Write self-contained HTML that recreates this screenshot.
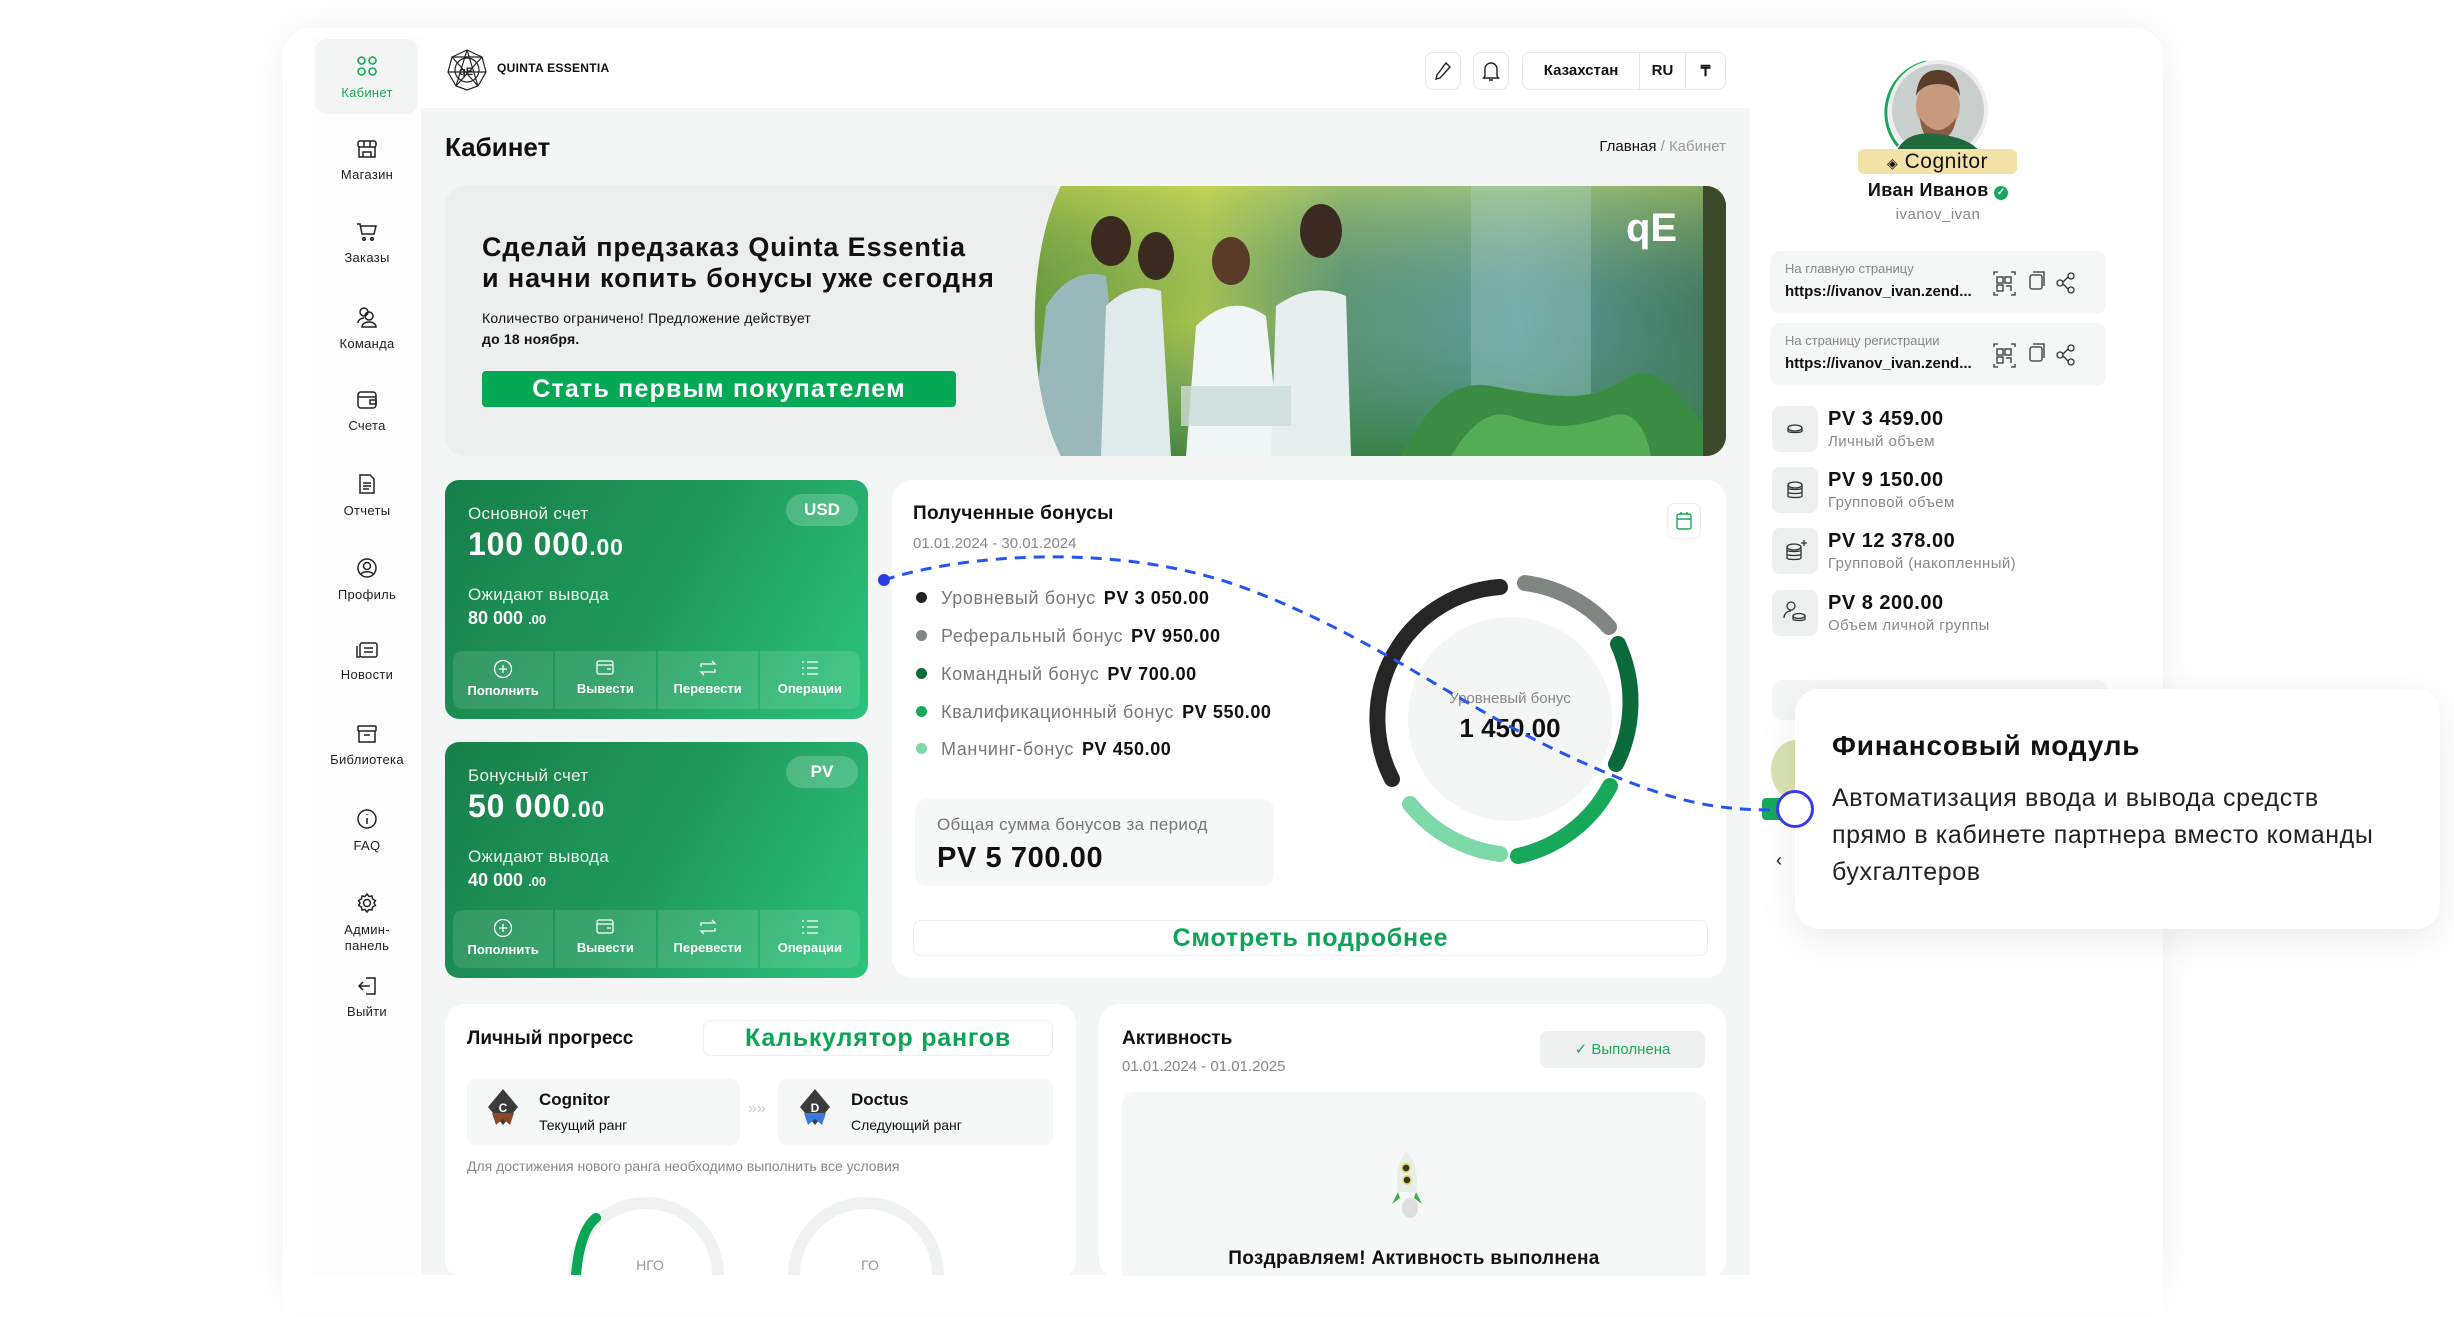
<!DOCTYPE html>
<html><head><meta charset="utf-8">
<style>
*{box-sizing:border-box;margin:0;padding:0}
body{width:2454px;height:1317px;background:#fff;font-family:"Liberation Sans",sans-serif;color:#111;position:relative;overflow:hidden}
.a{position:absolute}
.frame{left:283px;top:28px;width:1880px;height:1274px;background:#fff;border-radius:28px;box-shadow:0 0 40px rgba(0,0,0,.06)}
.main{left:421px;top:108px;width:1334px;height:1167px;background:#f4f5f5}
.side{left:313px;top:36px;width:108px;height:1240px;background:#fdfdfd}
.si{position:absolute;left:313px;width:108px;text-align:center;font-size:13px;color:#222;letter-spacing:.3px}
.si svg{display:block;margin:0 auto 8px}
.card{background:#fff;border-radius:20px}
.gcard{border-radius:14px;background:linear-gradient(120deg,#187f4a 0%,#1f9a5c 50%,#2cc47c 100%);color:#fff}
.gcard .l{font-size:17px;opacity:.9;letter-spacing:.3px}
.acts{position:absolute;left:8px;right:8px;bottom:10px;height:58px;display:flex;gap:2px}
.acts div{flex:1;background:rgba(255,255,255,.12);text-align:center;font-size:13px;font-weight:bold;padding-top:8px}
.acts div:first-child{border-radius:10px 0 0 10px}.acts div:last-child{border-radius:0 10px 10px 0}
.acts svg{display:block;margin:0 auto 4px}
.pill{position:absolute;right:10px;top:14px;width:72px;height:32px;border-radius:16px;background:rgba(255,255,255,.2);font-weight:bold;font-size:17px;text-align:center;line-height:32px}
.leg{position:absolute;left:916px;font-size:18px;color:#777;letter-spacing:.6px}
.leg b{color:#111;margin-left:8px}
.leg i{display:inline-block;width:11px;height:11px;border-radius:50%;margin-right:14px;vertical-align:1px}
.st{position:absolute;left:1772px;width:340px;height:48px}
.st .ic{position:absolute;left:0;top:0;width:46px;height:46px;border-radius:8px;background:#eef0f0}
.st .v{position:absolute;left:56px;top:2px;font-size:20px;font-weight:bold;letter-spacing:.5px}
.st .t{position:absolute;left:56px;top:27px;font-size:15px;color:#888;letter-spacing:.4px}
.lnk{position:absolute;left:1770px;width:336px;height:63px;background:#f5f6f6;border-radius:10px}
.lnk .t{position:absolute;left:15px;top:10px;font-size:13px;color:#888}
.lnk .u{position:absolute;left:15px;top:32px;font-size:15px;font-weight:bold}
</style></head><body>
<div class="a frame"></div>
<div class="a side"></div>
<div class="a main"></div>
<div class="a" style="left:1750px;top:36px;width:400px;height:1240px;background:#fff"></div>

<!-- sidebar -->
<div class="a" style="left:315px;top:39px;width:103px;height:75px;background:#f3f5f4;border-radius:12px"></div>
<div class="si" style="top:55px;color:#17a85b"><svg width="22" height="22" viewBox="0 0 22 22" fill="none" stroke="#17a85b" stroke-width="1.6"><rect x="2" y="2" width="7" height="7" rx="3.5"/><rect x="13" y="2" width="7" height="7" rx="3.5"/><rect x="2" y="13" width="7" height="7" rx="3.5"/><rect x="13" y="13" width="7" height="7" rx="3.5"/></svg>Кабинет</div>
<div class="si" style="top:139px"><svg width="22" height="20" viewBox="0 0 22 20" fill="none" stroke="#222" stroke-width="1.5"><rect x="2" y="2" width="18" height="6" rx="2"/><path d="M3 8v10h16V8M8 2v6M14 2v6M7 18v-5h8v5"/></svg>Магазин</div>
<div class="si" style="top:222px"><svg width="22" height="20" viewBox="0 0 22 20" fill="none" stroke="#222" stroke-width="1.5"><path d="M1 2h3l2 10h12l2-8H5"/><circle cx="8" cy="17" r="1.3"/><circle cx="16" cy="17" r="1.3"/></svg>Заказы</div>
<div class="si" style="top:306px"><svg width="24" height="22" viewBox="0 0 24 22" fill="none" stroke="#222" stroke-width="1.5"><circle cx="9" cy="6" r="4"/><circle cx="14" cy="10" r="4"/><path d="M3 17c0-3 3-5 6-5M7 21c0-3 3-5 7-5s7 2 7 5z"/></svg>Команда</div>
<div class="si" style="top:390px"><svg width="22" height="20" viewBox="0 0 22 20" fill="none" stroke="#222" stroke-width="1.5"><rect x="2" y="2" width="18" height="16" rx="3"/><path d="M2 7h18M14 10h6v4h-6z"/></svg>Счета</div>
<div class="si" style="top:473px"><svg width="18" height="22" viewBox="0 0 18 22" fill="none" stroke="#222" stroke-width="1.5"><path d="M2 2h10l4 4v14H2z"/><path d="M5 10h8M5 13h8M5 16h6"/></svg>Отчеты</div>
<div class="si" style="top:557px"><svg width="22" height="22" viewBox="0 0 22 22" fill="none" stroke="#222" stroke-width="1.5"><circle cx="11" cy="11" r="9"/><circle cx="11" cy="9" r="3.5"/><path d="M5 17c2-3 10-3 12 0"/></svg>Профиль</div>
<div class="si" style="top:641px"><svg width="24" height="18" viewBox="0 0 24 18" fill="none" stroke="#222" stroke-width="1.5"><rect x="5" y="2" width="17" height="14" rx="2"/><path d="M2 5v11h3M9 7h9M9 11h9"/></svg>Новости</div>
<div class="si" style="top:724px"><svg width="22" height="20" viewBox="0 0 22 20" fill="none" stroke="#222" stroke-width="1.5"><rect x="2" y="2" width="18" height="5" rx="1"/><path d="M3 7v11h16V7M8 11h6"/></svg>Библиотека</div>
<div class="si" style="top:808px"><svg width="22" height="22" viewBox="0 0 22 22" fill="none" stroke="#222" stroke-width="1.5"><circle cx="11" cy="11" r="9"/><path d="M11 10v6M11 6v1"/></svg>FAQ</div>
<div class="si" style="top:892px;line-height:16px"><svg width="22" height="22" viewBox="0 0 22 22" fill="none" stroke="#222" stroke-width="1.5"><path d="M11 2l2 2.5 3-.5.6 3 2.8 1.5-1.4 2.5 1.4 2.5-2.8 1.5-.6 3-3-.5L11 20l-2-2.5-3 .5-.6-3L2.6 13.5 4 11 2.6 8.5 5.4 7 6 4l3 .5z"/><circle cx="11" cy="11" r="3.5"/></svg>Админ-<br>панель</div>
<div class="si" style="top:976px"><svg width="22" height="20" viewBox="0 0 22 20" fill="none" stroke="#222" stroke-width="1.5"><path d="M10 2h9v16h-9M14 10H3M7 6l-4 4 4 4"/></svg>Выйти</div>

<!-- header -->
<svg class="a" style="left:446px;top:48px" width="42" height="44" viewBox="0 0 42 44" fill="none" stroke="#222" stroke-width="1.2"><polygon points="21,2 36,9 40,24 32,38 21,42 10,38 2,24 6,9"/><circle cx="21" cy="22" r="12"/><path d="M21 2L10 38M21 2l11 36M2 24l38 0M6 9l30 0M6 9l26 29M36 9L10 38"/><text x="13" y="27" font-size="11" font-weight="bold" fill="#222" stroke="none" font-family="Liberation Sans">qE</text></svg>
<div class="a" style="left:497px;top:61px;font-size:12px;font-weight:bold;letter-spacing:.3px">QUINTA ESSENTIA</div>
<div class="a" style="left:1425px;top:52px;width:36px;height:38px;border:1px solid #e6e6e6;border-radius:8px"></div>
<svg class="a" style="left:1434px;top:61px" width="18" height="20" viewBox="0 0 18 20" fill="none" stroke="#222" stroke-width="1.4"><path d="M12 2l4 4L6 17l-4 1 1-4z"/></svg>
<div class="a" style="left:1473px;top:52px;width:36px;height:38px;border:1px solid #e6e6e6;border-radius:8px"></div>
<svg class="a" style="left:1482px;top:60px" width="18" height="22" viewBox="0 0 18 22" fill="none" stroke="#222" stroke-width="1.4"><path d="M3 16V9a6 6 0 0112 0v7l1.5 2h-15zM7 20h4"/></svg>
<div class="a" style="left:1522px;top:52px;width:204px;height:38px;border:1px solid #e6e6e6;border-radius:8px;font-size:15px;font-weight:bold;display:flex;align-items:center">
<span style="width:117px;text-align:center;border-right:1px solid #e6e6e6;line-height:38px">Казахстан</span><span style="width:46px;text-align:center;border-right:1px solid #e6e6e6;line-height:38px">RU</span><span style="flex:1;text-align:center">₸</span></div>

<div class="a" style="left:445px;top:132px;font-size:26px;font-weight:bold">Кабинет</div>
<div class="a" style="left:1550px;top:138px;width:176px;text-align:right;font-size:15px"><span>Главная</span> <span style="color:#999">/ Кабинет</span></div>

<!-- banner -->
<div class="a" style="left:445px;top:186px;width:1281px;height:270px;background:#ecefee;border-radius:20px;overflow:hidden">
<svg class="a" style="left:586px;top:0" width="695" height="270" viewBox="0 0 695 270">
<defs>
<linearGradient id="bg1" x1="0" x2="1" y1="0" y2="0"><stop offset="0" stop-color="#6c9a3a"/><stop offset=".25" stop-color="#a6c24e"/><stop offset=".45" stop-color="#5c9676"/><stop offset=".7" stop-color="#5e9c9a"/><stop offset="1" stop-color="#3f7658"/></linearGradient>
<linearGradient id="bg2" x1="0" x2="0" y1="0" y2="1"><stop offset="0" stop-color="#e4e860" stop-opacity=".45"/><stop offset=".5" stop-color="#4f8e7e" stop-opacity="0"/><stop offset="1" stop-color="#2f7a3a" stop-opacity=".8"/></linearGradient>
<clipPath id="cp"><path d="M30 0H695V270H30C-5 200 -5 70 30 0z"/></clipPath>
</defs>
<g clip-path="url(#cp)">
<rect width="695" height="270" fill="url(#bg1)"/>
<rect width="695" height="270" fill="url(#bg2)"/>
<rect x="440" y="0" width="120" height="270" fill="#b6dcd8" opacity=".3"/>
<path d="M370 270q40-80 90-70t80 10 60-20 95 80z" fill="#3a8c42"/>
<path d="M420 270q30-50 60-40t50 10 50-10 40 40z" fill="#52ad55"/>
<rect x="672" y="0" width="23" height="270" fill="#3a4a2a"/>
<path d="M0 270L15 120Q40 80 75 90L95 270z" fill="#9ab8ba"/>
<ellipse cx="80" cy="55" rx="20" ry="25" fill="#3a2a20"/>
<path d="M70 270L75 120Q100 95 130 105L140 270z" fill="#dfeaea"/>
<ellipse cx="125" cy="70" rx="18" ry="24" fill="#3a2a20"/>
<path d="M155 270L165 140Q200 105 235 130L250 270z" fill="#f0f5f5"/>
<ellipse cx="200" cy="75" rx="19" ry="24" fill="#5a3a28"/>
<path d="M240 270L245 120Q280 95 315 110L320 270z" fill="#e6eeee"/>
<ellipse cx="290" cy="45" rx="21" ry="27" fill="#3a2a20"/>
<rect x="150" y="200" width="110" height="40" fill="#c9dcd8" opacity=".8"/>
<text x="595" y="55" font-size="40" font-weight="bold" fill="#fff" font-family="Liberation Sans">qE</text>
</g></svg>
<div class="a" style="left:37px;top:46px;font-size:27px;font-weight:bold;line-height:31px;letter-spacing:.9px">Сделай предзаказ Quinta Essentia<br>и начни копить бонусы уже сегодня</div>
<div class="a" style="left:37px;top:122px;font-size:14px;line-height:21px;letter-spacing:.2px">Количество ограничено! Предложение действует<br><b>до 18 ноября.</b></div>
<div class="a" style="left:37px;top:185px;width:474px;height:36px;background:#04a855;border-radius:4px;color:#fff;font-size:25px;font-weight:bold;text-align:center;line-height:36px;letter-spacing:1.2px">Стать первым покупателем</div>
</div>

<!-- accounts -->
<div class="a gcard" style="left:445px;top:480px;width:423px;height:239px">
<div class="a l" style="left:23px;top:24px">Основной счет</div>
<div class="a" style="left:23px;top:46px;font-size:32px;font-weight:bold;letter-spacing:.8px">100 000<span style="font-size:23px">.00</span></div>
<div class="a l" style="left:23px;top:105px">Ожидают вывода</div>
<div class="a" style="left:23px;top:128px;font-size:18px;font-weight:bold">80 000 <span style="font-size:13px">.00</span></div>
<div class="pill">USD</div>
<div class="acts">
<div><svg width="20" height="20" viewBox="0 0 20 20" fill="none" stroke="#fff" stroke-width="1.3"><circle cx="10" cy="10" r="8.5"/><path d="M10 6v8M6 10h8"/></svg>Пополнить</div>
<div><svg width="20" height="18" viewBox="0 0 20 18" fill="none" stroke="#fff" stroke-width="1.3"><rect x="2" y="2" width="16" height="13" rx="2"/><path d="M2 6h16M12 10h4"/></svg>Вывести</div>
<div><svg width="20" height="18" viewBox="0 0 20 18" fill="none" stroke="#fff" stroke-width="1.3"><path d="M3 8V5h14l-3-3M17 10v3H3l3 3"/></svg>Перевести</div>
<div><svg width="20" height="18" viewBox="0 0 20 18" fill="none" stroke="#fff" stroke-width="1.3"><path d="M7 3h11M7 9h11M7 15h11M2 3h2M2 9h2M2 15h2"/></svg>Операции</div>
</div></div>
<div class="a gcard" style="left:445px;top:742px;width:423px;height:236px">
<div class="a l" style="left:23px;top:24px">Бонусный счет</div>
<div class="a" style="left:23px;top:46px;font-size:32px;font-weight:bold;letter-spacing:.8px">50 000<span style="font-size:23px">.00</span></div>
<div class="a l" style="left:23px;top:105px">Ожидают вывода</div>
<div class="a" style="left:23px;top:128px;font-size:18px;font-weight:bold">40 000 <span style="font-size:13px">.00</span></div>
<div class="pill">PV</div>
<div class="acts">
<div><svg width="20" height="20" viewBox="0 0 20 20" fill="none" stroke="#fff" stroke-width="1.3"><circle cx="10" cy="10" r="8.5"/><path d="M10 6v8M6 10h8"/></svg>Пополнить</div>
<div><svg width="20" height="18" viewBox="0 0 20 18" fill="none" stroke="#fff" stroke-width="1.3"><rect x="2" y="2" width="16" height="13" rx="2"/><path d="M2 6h16M12 10h4"/></svg>Вывести</div>
<div><svg width="20" height="18" viewBox="0 0 20 18" fill="none" stroke="#fff" stroke-width="1.3"><path d="M3 8V5h14l-3-3M17 10v3H3l3 3"/></svg>Перевести</div>
<div><svg width="20" height="18" viewBox="0 0 20 18" fill="none" stroke="#fff" stroke-width="1.3"><path d="M7 3h11M7 9h11M7 15h11M2 3h2M2 9h2M2 15h2"/></svg>Операции</div>
</div></div>

<!-- bonuses -->
<div class="a card" style="left:892px;top:480px;width:834px;height:498px"></div>
<div class="a" style="left:913px;top:503px;font-size:19px;font-weight:bold;letter-spacing:.3px">Полученные бонусы</div>
<div class="a" style="left:913px;top:535px;font-size:15px;color:#888">01.01.2024 - 30.01.2024</div>
<div class="a" style="left:1667px;top:503px;width:34px;height:36px;border:1px solid #eee;border-radius:8px"></div>
<svg class="a" style="left:1675px;top:511px" width="18" height="20" viewBox="0 0 18 20" fill="none" stroke="#17a85b" stroke-width="1.4"><rect x="2" y="3" width="14" height="15" rx="2"/><path d="M2 8h14M6 1v3M12 1v3"/></svg>
<div class="leg" style="top:588px"><i style="background:#222"></i>Уровневый бонус<b>PV 3 050.00</b></div>
<div class="leg" style="top:626px"><i style="background:#808784"></i>Реферальный бонус<b>PV 950.00</b></div>
<div class="leg" style="top:664px"><i style="background:#0a6a3a"></i>Командный бонус<b>PV 700.00</b></div>
<div class="leg" style="top:702px"><i style="background:#17a85b"></i>Квалификационный бонус<b>PV 550.00</b></div>
<div class="leg" style="top:739px"><i style="background:#7dd9a8"></i>Манчинг-бонус<b>PV 450.00</b></div>
<div class="a" style="left:915px;top:799px;width:359px;height:87px;background:#f6f7f7;border-radius:12px"></div>
<div class="a" style="left:937px;top:815px;font-size:17px;color:#777;letter-spacing:.3px">Общая сумма бонусов за период</div>
<div class="a" style="left:937px;top:842px;font-size:29px;font-weight:bold;letter-spacing:.6px">PV 5 700.00</div>
<div class="a" style="left:913px;top:920px;width:795px;height:36px;border:1px solid #eee;border-radius:8px;text-align:center;font-size:25px;font-weight:bold;color:#0aa556;line-height:34px;letter-spacing:.8px">Смотреть подробнее</div>
<svg class="a" style="left:1360px;top:569px" width="300" height="300" viewBox="0 0 300 300" fill="none" stroke-linecap="round">
<circle cx="150" cy="150" r="102" fill="#f4f5f5"/>
<path d="M140 18 A132 132 0 0 0 32 210" stroke="#262626" stroke-width="16"/>
<path d="M165 14 A137 137 0 0 1 249 58" stroke="#7f8682" stroke-width="16"/>
<path d="M258 75 A140 140 0 0 1 256 195" stroke="#0a6a3a" stroke-width="16"/>
<path d="M250 217 A137 137 0 0 1 158 287" stroke="#17a85b" stroke-width="16"/>
<path d="M140 285 A137 137 0 0 1 50 235" stroke="#7dd9a8" stroke-width="16"/>
<text x="150" y="134" font-size="15" fill="#888" text-anchor="middle" font-family="Liberation Sans">Уровневый бонус</text>
<text x="150" y="168" font-size="26" font-weight="bold" fill="#111" text-anchor="middle" font-family="Liberation Sans">1 450.00</text>
</svg>

<!-- bottom cards -->
<div class="a card" style="left:445px;top:1004px;width:631px;height:275px"></div>
<div class="a" style="left:467px;top:1028px;font-size:19px;font-weight:bold">Личный прогресс</div>
<div class="a" style="left:703px;top:1020px;width:350px;height:36px;border:1px solid #eee;border-radius:8px;text-align:center;font-size:25px;font-weight:bold;color:#0aa556;line-height:34px;letter-spacing:.8px">Калькулятор рангов</div>
<div class="a" style="left:467px;top:1078px;width:273px;height:68px;background:#f6f7f7;border-radius:10px"></div>
<div class="a" style="left:778px;top:1078px;width:275px;height:68px;background:#f6f7f7;border-radius:10px"></div>
<svg class="a" style="left:486px;top:1087px" width="34" height="40" viewBox="0 0 34 40"><path d="M17 2L32 20 17 38 2 20z" fill="#3b3b3b"/><path d="M6 26l4 12 7-6 7 6 4-12" fill="#8a4a2a"/><text x="17" y="25" font-size="12" font-weight="bold" fill="#fff" text-anchor="middle" font-family="Liberation Sans">C</text></svg>
<div class="a" style="left:539px;top:1090px;font-size:17px;font-weight:bold">Cognitor</div>
<div class="a" style="left:539px;top:1117px;font-size:14px">Текущий ранг</div>
<div class="a" style="left:748px;top:1100px;font-size:16px;color:#ccc">»»</div>
<svg class="a" style="left:798px;top:1087px" width="34" height="40" viewBox="0 0 34 40"><path d="M17 2L32 20 17 38 2 20z" fill="#3b3b3b"/><path d="M6 26l4 12 7-6 7 6 4-12" fill="#3a7ae0"/><text x="17" y="25" font-size="12" font-weight="bold" fill="#fff" text-anchor="middle" font-family="Liberation Sans">D</text></svg>
<div class="a" style="left:851px;top:1090px;font-size:17px;font-weight:bold">Doctus</div>
<div class="a" style="left:851px;top:1117px;font-size:14px">Следующий ранг</div>
<div class="a" style="left:467px;top:1158px;font-size:14px;color:#888">Для достижения нового ранга необходимо выполнить все условия</div>
<svg class="a" style="left:558px;top:1190px" width="420" height="85" viewBox="0 0 420 85" fill="none"><path d="M16 85 A70 70 0 0 1 160 85" stroke="#f0f1f1" stroke-width="12"/><path d="M18 85 Q22 40 38 28" stroke="#0aa556" stroke-width="10" stroke-linecap="round"/><path d="M236 85 A70 70 0 0 1 380 85" stroke="#f0f1f1" stroke-width="12"/><text x="92" y="80" font-size="14" fill="#999" text-anchor="middle" font-family="Liberation Sans">НГО</text><text x="312" y="80" font-size="14" fill="#999" text-anchor="middle" font-family="Liberation Sans">ГО</text></svg>

<div class="a card" style="left:1099px;top:1004px;width:627px;height:275px"></div>
<div class="a" style="left:1122px;top:1028px;font-size:19px;font-weight:bold">Активность</div>
<div class="a" style="left:1122px;top:1058px;font-size:15px;color:#888">01.01.2024 - 01.01.2025</div>
<div class="a" style="left:1540px;top:1031px;width:165px;height:37px;background:#eef1f0;border-radius:8px;text-align:center;font-size:15px;color:#17a85b;line-height:37px">✓ Выполнена</div>
<div class="a" style="left:1122px;top:1092px;width:584px;height:190px;background:#f6f7f7;border-radius:12px"></div>
<svg class="a" style="left:1388px;top:1150px" width="40" height="70" viewBox="0 0 40 70"><path d="M18 2q14 14 10 40l-18 0q-4-26 8-40z" fill="#e8eee8"/><path d="M10 42l-6 12 8-6zM28 42l6 12-8-6z" fill="#3cae52"/><circle cx="18" cy="18" r="4" fill="#333" stroke="#e3d04a" stroke-width="1.5"/><circle cx="19" cy="30" r="4" fill="#333" stroke="#e3d04a" stroke-width="1.5"/><ellipse cx="22" cy="58" rx="8" ry="10" fill="#ddd"/></svg>
<div class="a" style="left:1122px;top:1248px;width:584px;text-align:center;font-size:19px;font-weight:bold;letter-spacing:.3px">Поздравляем! Активность выполнена</div>

<div class="a" style="left:283px;top:1276px;width:1880px;height:40px;background:#fff"></div>

<!-- right panel -->
<svg class="a" style="left:1878px;top:56px" width="116" height="110" viewBox="0 0 116 110"><path d="M20 90A52 52 0 0 1 48 6" stroke="#17a85b" stroke-width="3" fill="none"/><circle cx="60" cy="54" r="50" fill="#eee"/><circle cx="60" cy="54" r="46" fill="#c9cfcd"/><ellipse cx="60" cy="50" rx="22" ry="26" fill="#c79a7e"/><path d="M38 40q2-26 22-26t22 26q-6-12-22-12t-22 12z" fill="#5a3c28"/><path d="M42 62q18 24 36 0q-2 20-18 22t-18-22z" fill="#8a5e40"/><path d="M18 96q10-22 42-18t42 18v4H18z" fill="#1f6a3c"/></svg>
<div class="a" style="left:1858px;top:149px;width:159px;height:25px;background:#f4e3a8;border-radius:6px;font-size:21px;text-align:center;line-height:25px;letter-spacing:.5px"><span style="font-size:14px">◈</span> Cognitor</div>
<div class="a" style="left:1832px;top:180px;width:212px;text-align:center;font-size:18px;font-weight:bold;letter-spacing:.4px">Иван Иванов <span style="display:inline-block;width:14px;height:14px;border-radius:50%;background:#17a85b;color:#fff;font-size:10px;line-height:14px;vertical-align:1px;letter-spacing:0">✓</span></div>
<div class="a" style="left:1832px;top:206px;width:212px;text-align:center;font-size:15px;color:#888;letter-spacing:.5px">ivanov_ivan</div>

<div class="lnk" style="top:251px"><div class="t">На главную страницу</div><div class="u">https://ivanov_ivan.zend...</div></div>
<div class="lnk" style="top:323px"><div class="t">На страницу регистрации</div><div class="u">https://ivanov_ivan.zend...</div></div>
<svg class="a" style="left:1993px;top:270px" width="100" height="30" viewBox="0 0 100 30" fill="none" stroke="#333" stroke-width="1.3"><rect x="4" y="7" width="6" height="6"/><rect x="12" y="7" width="6" height="6"/><rect x="4" y="15" width="6" height="6"/><path d="M1 5V2h4M18 2h4v3M1 22v3h4M22 22v3h-4M13 16h5v5"/><rect x="37" y="5" width="12" height="14" rx="2"/><path d="M40 2h11v14"/><circle cx="67" cy="13" r="3"/><circle cx="78" cy="6" r="3"/><circle cx="78" cy="20" r="3"/><path d="M70 12l5-5M70 14l5 5"/></svg>
<svg class="a" style="left:1993px;top:342px" width="100" height="30" viewBox="0 0 100 30" fill="none" stroke="#333" stroke-width="1.3"><rect x="4" y="7" width="6" height="6"/><rect x="12" y="7" width="6" height="6"/><rect x="4" y="15" width="6" height="6"/><path d="M1 5V2h4M18 2h4v3M1 22v3h4M22 22v3h-4M13 16h5v5"/><rect x="37" y="5" width="12" height="14" rx="2"/><path d="M40 2h11v14"/><circle cx="67" cy="13" r="3"/><circle cx="78" cy="6" r="3"/><circle cx="78" cy="20" r="3"/><path d="M70 12l5-5M70 14l5 5"/></svg>

<div class="st" style="top:406px"><div class="ic"><svg width="46" height="46" viewBox="0 0 46 46" fill="none" stroke="#333" stroke-width="1.3"><ellipse cx="23" cy="22" rx="7" ry="3"/><path d="M16 22v3c0 2 14 2 14 0v-3"/></svg></div><div class="v">PV 3 459.00</div><div class="t">Личный объем</div></div>
<div class="st" style="top:467px"><div class="ic"><svg width="46" height="46" viewBox="0 0 46 46" fill="none" stroke="#333" stroke-width="1.3"><ellipse cx="23" cy="18" rx="7" ry="3"/><path d="M16 18v3c0 2 14 2 14 0v-3M16 21v4c0 2 14 2 14 0v-4M16 25v4c0 2 14 2 14 0v-4"/></svg></div><div class="v">PV 9 150.00</div><div class="t">Групповой объем</div></div>
<div class="st" style="top:528px"><div class="ic"><svg width="46" height="46" viewBox="0 0 46 46" fill="none" stroke="#333" stroke-width="1.3"><ellipse cx="22" cy="19" rx="7" ry="3"/><path d="M15 19v3c0 2 14 2 14 0v-3M15 22v4c0 2 14 2 14 0v-4M15 26v4c0 2 14 2 14 0v-4M32 12v6M29 15h6"/></svg></div><div class="v">PV 12 378.00</div><div class="t">Групповой (накопленный)</div></div>
<div class="st" style="top:590px"><div class="ic"><svg width="46" height="46" viewBox="0 0 46 46" fill="none" stroke="#333" stroke-width="1.3"><circle cx="19" cy="16" r="4"/><path d="M12 28c0-4 3-7 7-7"/><ellipse cx="27" cy="26" rx="6" ry="2.5"/><path d="M21 26v3c0 2 12 2 12 0v-3"/></svg></div><div class="v">PV 8 200.00</div><div class="t">Объем личной группы</div></div>

<div class="a" style="left:1772px;top:680px;width:336px;height:40px;background:#f5f6f6;border-radius:10px"></div>
<div class="a" style="left:1771px;top:740px;width:50px;height:60px;border-radius:50%;background:#d8e4b0"></div>
<div class="a" style="left:1762px;top:798px;width:30px;height:22px;background:#17a85b;border-radius:4px"></div>
<div class="a" style="left:1776px;top:850px;font-size:18px">‹</div>

<!-- dashed connector -->
<svg class="a" style="left:0;top:0" width="2454" height="1317" viewBox="0 0 2454 1317" fill="none">
<path d="M884 580 C 960 555, 1120 540, 1250 590 S 1450 700, 1560 752 S 1715 810, 1778 810" stroke="#2455ee" stroke-width="3" stroke-dasharray="11 8"/>
<circle cx="884" cy="580" r="6" fill="#2b3ee0"/>
</svg>

<!-- popup -->
<div class="a" style="left:1795px;top:689px;width:645px;height:240px;background:#fff;border-radius:24px;box-shadow:0 10px 40px rgba(0,0,0,.08)"></div>
<div class="a" style="left:1832px;top:730px;font-size:28px;font-weight:bold;letter-spacing:.8px">Финансовый модуль</div>
<div class="a" style="left:1832px;top:780px;font-size:25px;line-height:37px;letter-spacing:.6px;color:#222">Автоматизация ввода и вывода средств<br>прямо в кабинете партнера вместо команды<br>бухгалтеров</div>
<div class="a" style="left:1776px;top:790px;width:38px;height:38px;border-radius:50%;border:3px solid #3a3ae8;background:#fff"></div>
</body></html>
